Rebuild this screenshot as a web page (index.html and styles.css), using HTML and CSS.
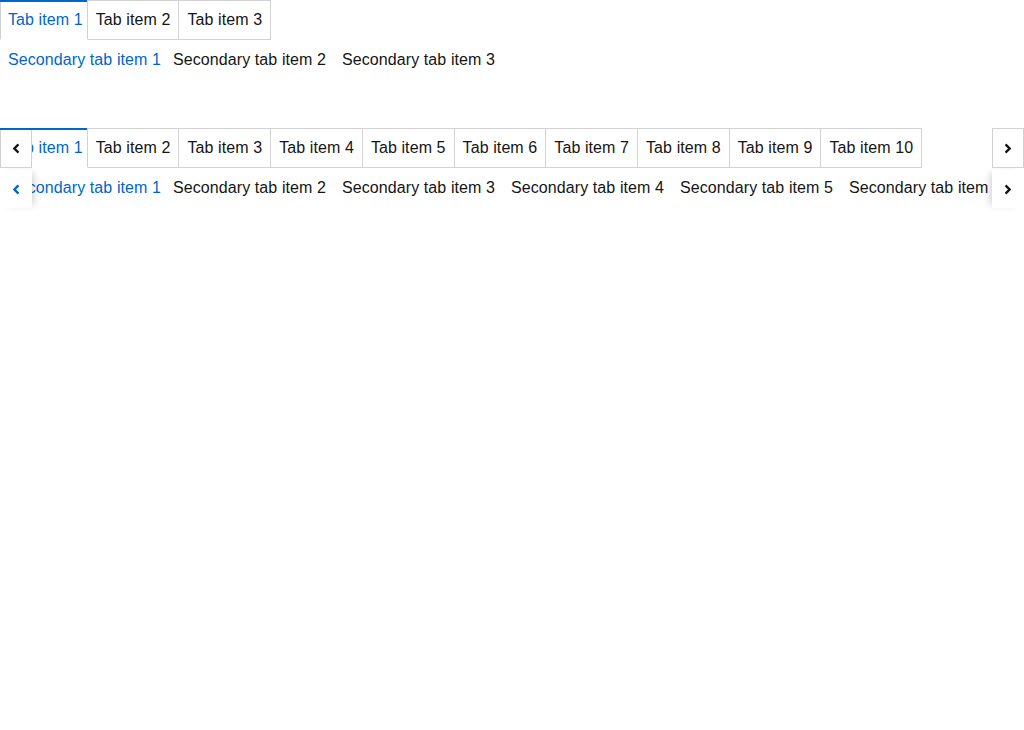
FILE: index.html
```html
<!DOCTYPE html>
<html lang="en">
<head>
<meta charset="utf-8">
<title>Tabs</title>
<link rel="stylesheet" href="styles.css">
</head>
<body>
<section class="demo">
  <div class="tabs-wrap">
    <ul class="tabs">
      <li class="tab current">Tab item 1</li>
      <li class="tab">Tab item 2</li>
      <li class="tab">Tab item 3</li>
    </ul>
  </div>
  <div class="sec-wrap">
    <ul class="sec-tabs">
      <li class="sec-tab current">Secondary tab item 1</li>
      <li class="sec-tab">Secondary tab item 2</li>
      <li class="sec-tab">Secondary tab item 3</li>
    </ul>
  </div>
</section>

<section class="demo demo-scroll">
  <div class="tabs-wrap">
    <ul class="tabs">
      <li class="tab current">Tab item 1</li>
      <li class="tab">Tab item 2</li>
      <li class="tab">Tab item 3</li>
      <li class="tab">Tab item 4</li>
      <li class="tab">Tab item 5</li>
      <li class="tab">Tab item 6</li>
      <li class="tab">Tab item 7</li>
      <li class="tab">Tab item 8</li>
      <li class="tab">Tab item 9</li>
      <li class="tab">Tab item 10</li>
    </ul>
    <button class="scroll-btn left" aria-label="Scroll left"><svg viewBox="0 0 256 512" class="chev"><path d="M31.7 239l136-136c9.4-9.4 24.6-9.4 33.9 0l22.6 22.6c9.4 9.4 9.4 24.6 0 33.9L127.9 256l96.4 96.4c9.4 9.4 9.4 24.6 0 33.9L201.7 409c-9.4 9.4-24.6 9.4-33.9 0l-136-136c-9.5-9.4-9.5-24.6-.1-34z"/></svg></button>
    <button class="scroll-btn right" aria-label="Scroll right"><svg viewBox="0 0 256 512" class="chev"><path d="M224.3 273l-136 136c-9.4 9.4-24.6 9.4-33.9 0l-22.6-22.6c-9.4-9.4-9.4-24.6 0-33.9l96.4-96.4-96.4-96.4c-9.4-9.4-9.4-24.6 0-33.9L54.3 103c9.4-9.4 24.6-9.4 33.9 0l136 136c9.5 9.4 9.5 24.6.1 34z"/></svg></button>
  </div>
  <div class="sec-wrap">
    <ul class="sec-tabs">
      <li class="sec-tab current">Secondary tab item 1</li>
      <li class="sec-tab">Secondary tab item 2</li>
      <li class="sec-tab">Secondary tab item 3</li>
      <li class="sec-tab">Secondary tab item 4</li>
      <li class="sec-tab">Secondary tab item 5</li>
      <li class="sec-tab">Secondary tab item 6</li>
      <li class="sec-tab">Secondary tab item 7</li>
      <li class="sec-tab">Secondary tab item 8</li>
      <li class="sec-tab">Secondary tab item 9</li>
      <li class="sec-tab">Secondary tab item 10</li>
    </ul>
    <button class="sec-btn left blue" aria-label="Scroll left"><svg viewBox="0 0 256 512" class="chev"><path d="M31.7 239l136-136c9.4-9.4 24.6-9.4 33.9 0l22.6 22.6c9.4 9.4 9.4 24.6 0 33.9L127.9 256l96.4 96.4c9.4 9.4 9.4 24.6 0 33.9L201.7 409c-9.4 9.4-24.6 9.4-33.9 0l-136-136c-9.5-9.4-9.5-24.6-.1-34z"/></svg></button>
    <button class="sec-btn right" aria-label="Scroll right"><svg viewBox="0 0 256 512" class="chev"><path d="M224.3 273l-136 136c-9.4 9.4-24.6 9.4-33.9 0l-22.6-22.6c-9.4-9.4-9.4-24.6 0-33.9l96.4-96.4-96.4-96.4c-9.4-9.4-9.4-24.6 0-33.9L54.3 103c9.4-9.4 24.6-9.4 33.9 0l136 136c9.5 9.4 9.5 24.6.1 34z"/></svg></button>
  </div>
</section>
</body>
</html>
```

FILE: styles.css
```css
* { box-sizing: border-box; }

body {
  margin: 0;
  background: #fff;
  color: #151515;
  font-family: "Liberation Sans", Arial, sans-serif;
  font-size: 16px;
  line-height: 24px;
  letter-spacing: 0.09px;
}

.demo-scroll {
  margin-top: 48px;
}

.tabs-wrap,
.sec-wrap {
  position: relative;
  overflow: hidden;
  height: 40px;
}

.tabs,
.sec-tabs {
  display: flex;
  margin: 0;
  padding: 0;
  list-style: none;
  white-space: nowrap;
}

.tab {
  position: relative;
  flex: none;
  height: 40px;
  padding: 7px 8px 8px;
  border: 1px solid #d2d2d2;
  border-left-width: 0;
  background: #fff;
}

.tab:first-child {
  border-left-width: 1px;
}

.tab.current {
  color: #06c;
  border-bottom-color: transparent;
  padding-right: 4px;
  padding-left: 7px;
}

.tab.current::after {
  content: "";
  position: absolute;
  z-index: 3;
  top: -1px;
  left: -1px;
  right: 0;
  height: 2px;
  background: #06c;
}

.sec-tab {
  flex: none;
  padding: 8px 8px 8px;
}

.sec-tab.current {
  padding-right: 4px;
  color: #06c;
}

.scroll-btn,
.sec-btn {
  position: absolute;
  top: 0;
  z-index: 2;
  width: 32px;
  height: 40px;
  padding: 0;
  margin: 0;
  display: flex;
  align-items: center;
  justify-content: center;
  background: #fff;
  color: #151515;
  cursor: pointer;
}

.scroll-btn {
  border: 1px solid #d2d2d2;
}

.sec-btn {
  border: 0;
}

.scroll-btn.left,
.sec-btn.left {
  left: 0;
}

.scroll-btn.right,
.sec-btn.right {
  right: 0;
}

.sec-btn.left {
  box-shadow: 5px 0 7px -3px rgba(3, 3, 3, 0.18);
}

.sec-btn.right {
  box-shadow: -5px 0 7px -3px rgba(3, 3, 3, 0.18);
}

.demo-scroll .sec-wrap {
  height: 44px;
}

.demo-scroll .sec-btn {
  top: 2px;
  height: 38px;
}

.sec-btn.blue {
  color: #06c;
}

.chev {
  width: 8px;
  height: 15px;
  fill: currentColor;
  display: block;
}
```
